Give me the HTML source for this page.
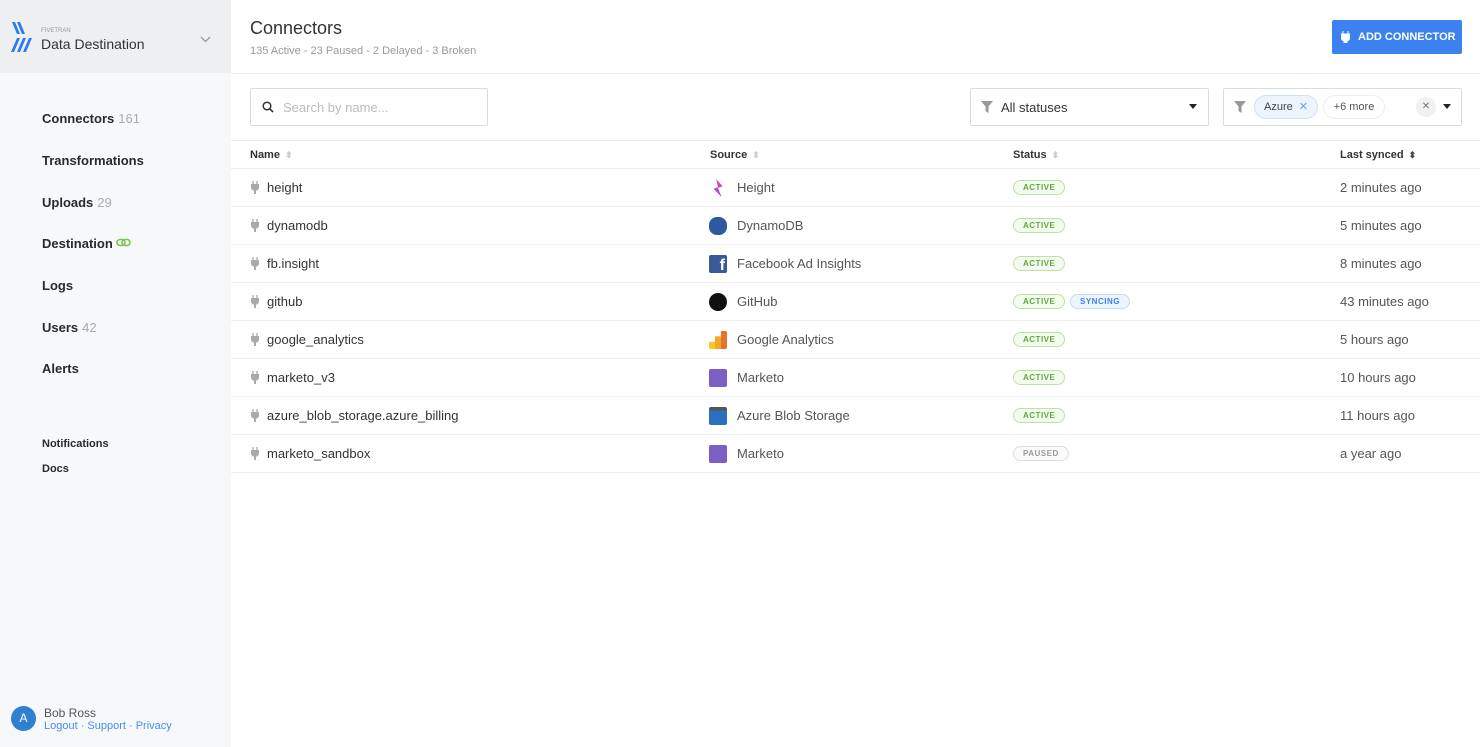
<!DOCTYPE html>
<html><head><meta charset="utf-8"><style>
*{box-sizing:border-box;margin:0;padding:0}
body{width:1480px;height:747px;overflow:hidden;font-family:"Liberation Sans",sans-serif;color:#333;background:#fff;position:relative}
.sb{position:absolute;left:0;top:0;width:231px;height:747px;background:#f7f8f9}
.sbh{position:absolute;left:0;top:0;width:231px;height:73px;background:#eeeff1}
.nav{position:absolute;left:42px;font-size:13px;font-weight:bold;color:#2a2a2a}
.nav span{color:#aaa;font-weight:normal;margin-left:4px}
.sm{position:absolute;left:42px;font-size:11px;font-weight:bold;color:#2a2a2a}
.abs{position:absolute}
.box{position:absolute;border:1px solid #dcdcdc;border-radius:2px;background:#fff}
.th{position:absolute;top:149px;font-size:11px;font-weight:bold;color:#333}
.th i{font-style:normal;color:#ccc;font-size:9px;margin-left:5px}
.row{position:absolute;left:231px;width:1249px;height:38px;border-bottom:1px solid #f0f0f0}
.row div{position:absolute;top:11px;font-size:13px}
.nm{left:36px;color:#333}
.plug{left:19px!important;top:12px!important;width:10px;height:13px;background:no-repeat url()}
.src{left:506px;color:#555}
.ic{left:478px;top:10px!important;width:18px;height:18px;border-radius:2px}
.st{left:782px;top:11px!important;font-size:8px!important;font-weight:bold;color:#5fa83f;border:1px solid #b9e2a3;background:#f3fbee;border-radius:8px;padding:2px 9px;letter-spacing:.5px}
.ls{left:1109px;color:#555}
</style></head><body>
<div class="sb"></div><div class="sbh"></div>
<svg class="abs" style="left:11px;top:22px" width="22" height="30" viewBox="0 0 22 30"><g fill="#2b7bf0"><path d="M1 0h3l5 12h-3z"/><path d="M6 0h3l5 12h-3z"/><path d="M0 30h3l6-14h-3z"/><path d="M6 30h3l6-14h-3z"/><path d="M12 30h3l6-14h-3z"/></g></svg>
<div class="abs" style="left:41px;top:28px;font-size:6px;color:#999">FIVETRAN</div>
<div class="abs" style="left:41px;top:36px;font-size:14px;color:#333">Data Destination</div>
<svg class="abs" style="left:200px;top:36px" width="11" height="7"><path d="M1 1l4.5 4.5L10 1" stroke="#999" stroke-width="1.3" fill="none"/></svg>
<div class="nav" style="top:111px">Connectors<span>161</span></div>
<div class="nav" style="top:153px">Transformations</div>
<div class="nav" style="top:195px">Uploads<span>29</span></div>
<div class="nav" style="top:236px">Destination <svg width="16" height="10" style="vertical-align:0"><rect x="1" y="1.5" width="8" height="6" rx="3" stroke="#7cc44f" stroke-width="1.6" fill="none"/><rect x="6" y="1.5" width="8" height="6" rx="3" stroke="#7cc44f" stroke-width="1.6" fill="none"/></svg></div>
<div class="nav" style="top:278px">Logs</div>
<div class="nav" style="top:320px">Users<span>42</span></div>
<div class="nav" style="top:361px">Alerts</div>
<div class="sm" style="top:438px">Notifications</div>
<div class="sm" style="top:463px">Docs</div>
<div class="abs" style="left:11px;top:706px;width:25px;height:25px;border-radius:50%;background:#2f80d0;color:#fff;font-size:12px;text-align:center;line-height:25px">A</div>
<div class="abs" style="left:44px;top:706px;font-size:12px;color:#555">Bob Ross</div>
<div class="abs" style="left:44px;top:720px;font-size:11px;color:#4a8ef0">Logout · Support · Privacy</div>

<div class="abs" style="left:250px;top:18px;font-size:18px;color:#333">Connectors</div>
<div class="abs" style="left:250px;top:45px;font-size:11px;color:#999">135 Active - 23 Paused - 2 Delayed - 3 Broken</div>
<div class="abs" style="left:1332px;top:20px;width:130px;height:34px;background:#3b82f0;border-radius:2px;color:#fff;font-size:11px;font-weight:bold;line-height:34px;padding-left:26px">ADD CONNECTOR</div>
<svg class="abs" style="left:1341px;top:31px" width="9" height="12"><path d="M2 0v3M7 0v3M0 3h9v3a4.5 4.5 0 0 1-3 4v2H3v-2a4.5 4.5 0 0 1-3-4z" fill="#fff" stroke="#fff" stroke-width="1"/></svg>
<div class="abs" style="left:231px;top:73px;width:1249px;height:1px;background:#ececec"></div>

<div class="box" style="left:250px;top:88px;width:238px;height:38px"></div>
<svg class="abs" style="left:262px;top:101px" width="12" height="12"><circle cx="5" cy="5" r="3.8" stroke="#333" stroke-width="1.5" fill="none"/><path d="M8 8l3 3" stroke="#333" stroke-width="1.6"/></svg>
<div class="abs" style="left:283px;top:100px;font-size:13px;color:#bbb">Search by name...</div>
<div class="box" style="left:970px;top:88px;width:239px;height:38px"></div>
<svg class="abs" style="left:981px;top:101px" width="12" height="12"><path d="M0 0h12L7.5 5.5V12l-3-2V5.5z" fill="#999"/></svg>
<div class="abs" style="left:1001px;top:100px;font-size:13px;color:#333">All statuses</div>
<svg class="abs" style="left:1189px;top:104px" width="8" height="5"><path d="M0 0h8L4 5z" fill="#222"/></svg>
<div class="box" style="left:1223px;top:88px;width:239px;height:38px"></div>
<svg class="abs" style="left:1234px;top:101px" width="12" height="12"><path d="M0 0h12L7.5 5.5V12l-3-2V5.5z" fill="#999"/></svg>
<div class="abs" style="left:1254px;top:95px;width:64px;height:24px;border:1px solid #cfe0f7;background:#edf4fd;border-radius:12px;font-size:11px;color:#444;line-height:22px;padding-left:9px">Azure <span style="color:#6aa0ee;margin-left:3px">✕</span></div>
<div class="abs" style="left:1323px;top:95px;width:62px;height:24px;border:1px solid #eee;border-radius:12px;font-size:11px;color:#555;line-height:22px;text-align:center">+6 more</div>
<div class="abs" style="left:1416px;top:97px;width:20px;height:20px;border-radius:50%;background:#f1f1f1;color:#777;font-size:10px;text-align:center;line-height:20px">✕</div>
<svg class="abs" style="left:1443px;top:104px" width="8" height="5"><path d="M0 0h8L4 5z" fill="#222"/></svg>
<div class="abs" style="left:231px;top:140px;width:1249px;height:1px;background:#ececec"></div>

<div class="th" style="left:250px">Name<i>⬍</i></div>
<div class="th" style="left:710px">Source<i>⬍</i></div>
<div class="th" style="left:1013px">Status<i>⬍</i></div>
<div class="th" style="left:1340px">Last synced<i style="color:#444">⬍</i></div>
<div class="abs" style="left:231px;top:168px;width:1249px;height:1px;background:#ececec"></div>

<svg width="0" height="0" style="position:absolute"><defs><symbol id="p" viewBox="0 0 10 13"><path d="M3 0v3M7 0v3" stroke="#aaa" stroke-width="1.3"/><path d="M1 3h8v3a4 4 0 0 1-3 3.8V13H4V9.8A4 4 0 0 1 1 6z" fill="#aaa"/></symbol></defs></svg>
<div class="row" style="top:169px"><svg class="abs" style="left:19px;top:12px" width="10" height="13"><use href="#p"/></svg><div class="nm">height</div><div class="ic" style="background:linear-gradient(135deg,#f04b8a,#8a4bf0);clip-path:polygon(40% 0,75% 40%,50% 50%,70% 100%,25% 55%,50% 45%)"></div><div class="src">Height</div><div class="st">ACTIVE</div><div class="ls">2 minutes ago</div></div>
<div class="row" style="top:207px"><svg class="abs" style="left:19px;top:12px" width="10" height="13"><use href="#p"/></svg><div class="nm">dynamodb</div><div class="ic" style="background:#2d5a9e;border-radius:8px"></div><div class="src">DynamoDB</div><div class="st">ACTIVE</div><div class="ls">5 minutes ago</div></div>
<div class="row" style="top:245px"><svg class="abs" style="left:19px;top:12px" width="10" height="13"><use href="#p"/></svg><div class="nm">fb.insight</div><div class="ic" style="background:#3b5998;color:#fff;font-weight:bold;font-size:16px;text-align:right;line-height:22px;padding-right:2px;overflow:hidden">f</div><div class="src">Facebook Ad Insights</div><div class="st">ACTIVE</div><div class="ls">8 minutes ago</div></div>
<div class="row" style="top:283px"><svg class="abs" style="left:19px;top:12px" width="10" height="13"><use href="#p"/></svg><div class="nm">github</div><div class="ic" style="background:#111;border-radius:50%"></div><div class="src">GitHub</div><div class="st">ACTIVE</div><div class="st" style="left:839px;color:#3b82f0;border-color:#c4dbfb;background:#eef5fe">SYNCING</div><div class="ls">43 minutes ago</div></div>
<div class="row" style="top:321px"><svg class="abs" style="left:19px;top:12px" width="10" height="13"><use href="#p"/></svg><div class="nm">google_analytics</div><div class="ic" style="background:linear-gradient(90deg,#f9c52d 0 33%,#f5a623 33% 66%,#e8732c 66%);clip-path:polygon(0 60%,33% 60%,33% 30%,66% 30%,66% 0,100% 0,100% 100%,0 100%)"></div><div class="src">Google Analytics</div><div class="st">ACTIVE</div><div class="ls">5 hours ago</div></div>
<div class="row" style="top:359px"><svg class="abs" style="left:19px;top:12px" width="10" height="13"><use href="#p"/></svg><div class="nm">marketo_v3</div><div class="ic" style="background:#7b5fc7"></div><div class="src">Marketo</div><div class="st">ACTIVE</div><div class="ls">10 hours ago</div></div>
<div class="row" style="top:397px"><svg class="abs" style="left:19px;top:12px" width="10" height="13"><use href="#p"/></svg><div class="nm">azure_blob_storage.azure_billing</div><div class="ic" style="background:linear-gradient(#555 0 20%,#2c6fc0 20%)"></div><div class="src">Azure Blob Storage</div><div class="st">ACTIVE</div><div class="ls">11 hours ago</div></div>
<div class="row" style="top:435px"><svg class="abs" style="left:19px;top:12px" width="10" height="13"><use href="#p"/></svg><div class="nm">marketo_sandbox</div><div class="ic" style="background:#7b5fc7"></div><div class="src">Marketo</div><div class="st" style="color:#999;border-color:#ddd;background:#fafafa">PAUSED</div><div class="ls">a year ago</div></div>
</body></html>
